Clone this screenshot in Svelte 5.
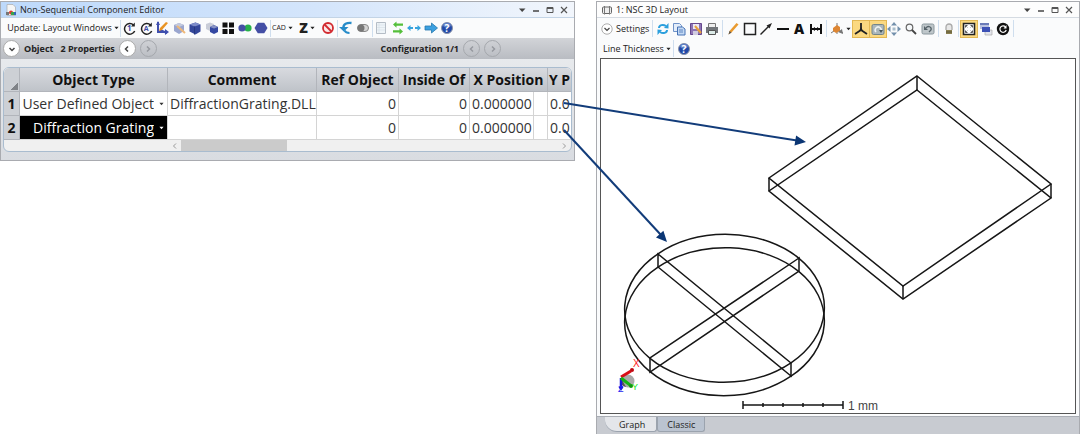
<script>
    const icons = {
        update: '<path d="M11.5 4A5.3 5.3 0 1 0 12.7 10" fill="none" stroke="#222" stroke-width="1.5"/><path d="M12.8 1.5v4H9z" fill="#222"/><text x="7.2" y="10.300" text-anchor="middle" font-size="8" font-weight="700" fill="#3d4ba5">1</text>',
        updateAll: '<path d="M11.5 4A5.3 5.3 0 1 0 12.7 10" fill="none" stroke="#222" stroke-width="1.5"/><path d="M12.8 1.5v4H9z" fill="#222"/><text x="7.2" y="10" text-anchor="middle" font-size="7" font-weight="700" fill="#3d4ba5">A</text>',
        axes: '<path d="M3 1v10h9M5 9l7 3" fill="none" stroke="#3f4fae" stroke-width="2"/><path d="M1 4l2-4 2 4zM10 8l4 3-4 3z" fill="#3f4fae"/><path d="M4 10l1-3 6-6 2 1-6 7z" fill="#e99424"/>',
        wand: '<path d="M2 4l5-2 5 2v6l-5 3-5-3z" fill="#9aa6cf"/><path d="M2 4l5-2 5 2-5 2z" fill="#c3cade"/><path d="M5 5l8 7" stroke="#efb878" stroke-width="2"/>',
        cube: '<path d="M1.500 3.500l6-2 5 2v7l-5 3-6-3z" fill="#34479a"/><path d="M1.500 3.500l6-2 5 2-6 2z" fill="#7d8cc9"/><path d="M6.500 5.500v8" stroke="#26387f"/>',
        cubes: '<path d="M1 3l4-1.500 4 1.500v5l-4 2-4-2z" fill="#c9cdd8"/><path d="M5 6l4-2 4 2v5l-4 2-4-2z" fill="#3448a2"/><path d="M5 6l4-2 4 2-4 1.500z" fill="#8792c4"/>',
        grid: '<path d="M1.500 1.500h5v5h-5zM8 1.500h5v5H8zM1.500 8h5v5h-5zM8 8h5v5H8z" fill="#111"/>',
        pair: '<circle cx="10" cy="7" r="3.600" fill="#27b04b"/><circle cx="4" cy="7" r="3.600" fill="#444fa5"/>',
        hexagon: '<path d="M3.800 1.800h6.400L13.500 7l-3.300 5.200H3.800L.5 7z" fill="#444fa5"/>',
        none: '<circle cx="7" cy="7" r="5" fill="#fbe9e9" stroke="#d22a30" stroke-width="1.800"/><path d="M3.500 3.500l7 7" stroke="#d22a30" stroke-width="1.800"/>',
        undo: '<path d="M12.500 2C8 1.500 4 3 4.500 7" fill="none" stroke="#258bc9" stroke-width="2.400"/><path d="M0 6h9.500L4.800 10.500z" fill="#258bc9"/><path d="M5.500 9.500c1 2 3 2.500 5 2.500" fill="none" stroke="#258bc9" stroke-width="2"/>',
        toggle: '<rect x="1.500" y="3.500" width="11" height="7" rx="3.500" fill="#d4d4d4" stroke="#888"/><circle cx="5" cy="7" r="3.500" fill="#777"/>',
        sheet: '<path d="M2.500 1.500h9v11h-9z" fill="#eef4f8" stroke="#b5bdc6"/><path d="M3 4h8M3 6.500h8M3 9h8M5 2v10" stroke="#d5dee6" stroke-width=".6"/>',
        swap: '<path d="M5.500.500v2H12v2.200H5.500v2L2 3.600zM8.500 7.300v2H2v2.200h6.500v2l3.500-3.100z" fill="#54bf3a"/>',
        spread: '<path d="M0 7l3.500-3v2H6v2H3.500v2zM14 7l-3.500-3v2H8v2h2.500v2z" fill="#37a3dd"/>',
        right: '<path d="M1 5h6.500V2L13.500 7l-6 5V9H1z" fill="#3ca0e0" stroke="#2678ae" stroke-width=".8"/>',
        help: '<circle cx="7" cy="7" r="5.500" fill="#2149a8" stroke="#8b93a8"/><ellipse cx="7" cy="4.200" rx="3.800" ry="2.400" fill="#5f80c8"/><text x="7" y="10.700" text-anchor="middle" font-size="10" font-weight="700" fill="#fff">?</text>',
        refresh: '<path d="M3 6c0-3 4-4 7-2M11 8c0 3-4 4-7 2" fill="none" stroke="#2b9fdd" stroke-width="2"/><path d="M8 6l4.500.500V1zM6 8l-4.500-.5V13z" fill="#2b9fdd"/>',
        copy: '<path d="M1.500 1.500h6l2 2v6h-8z" fill="#e3edfa" stroke="#6f92c8"/><path d="M5.500 5h5l2.500 2v6H5.500z" fill="#c3d9f4" stroke="#4672b5"/><path d="M7 8h4M7 10h4" stroke="#4672b5" stroke-width=".8"/>',
        save: '<path d="M1.500 1.500h11v11h-11z" fill="#8d74b4" stroke="#66478e"/><path d="M4 2h6v5H4z" fill="#ece8f4"/><path d="M4 9h5v4H4z" fill="#d1cce0"/><path d="M6 4l6 7" stroke="#e8a13a" stroke-width="2"/>',
        print: '<path d="M3.500 1.500h7v4h-7z" fill="#eee" stroke="#777"/><path d="M1 5h12v6H1z" fill="#72767a"/><path d="M3.500 8.500h7v4h-7z" fill="#dcebe8" stroke="#555"/>',
        pencil: '<path d="M2.500 12.500l1-3.500 7-8 2 1.500-7 8z" fill="#e99a2f"/><path d="M2.500 12.500l1-3.500 2 1.500z" fill="#555"/>',
        rect: '<path d="M1.500 1.500h11v11h-11z" fill="none" stroke="#222" stroke-width="1.500"/>',
        line: '<path d="M1.500 12.500l9-9" stroke="#222" stroke-width="1.300"/><path d="M13 1L7.500 3.500l3 3z" fill="#222"/>',
        dash: '<path d="M1 7h12" stroke="#111" stroke-width="2"/>',
        text: '<text x="7" y="12" text-anchor="middle" font-size="14" font-weight="800" fill="#111">A</text>',
        measure: '<path d="M2 2v10M12 2v10M2 7h10" stroke="#111" stroke-width="2"/><path d="M3 7l3-2v4zM11 7L8 5v4z" fill="#111"/>',
        view: '<path d="M1 11l6-4 6 4M7 1v11" fill="none" stroke="#777"/><path d="M3 6l4-3 3 2v4l-4 2-3-2z" fill="#dd8633"/><path d="M8 10l4-3 1 5z" fill="#777"/>',
        tripod: '<path d="M7 1v7M7 8l-6 4M7 8l6 4" fill="none" stroke="#222" stroke-width="1.800"/><path d="M7 5l2 4H5z" fill="#222"/>',
        camera: '<rect x="1" y="2.500" width="12" height="10" rx="1.500" fill="#aab6ba" stroke="#73858b"/><path d="M5 10A3 3 0 1 1 10 9" fill="none" stroke="#eef3f4" stroke-width="1.500"/><path d="M8 8h4l-2 3z" fill="#46555b"/>',
        move: '<path d="M7 0l3 3.500H4zM7 14l3-3.500H4zM0 7l3.500-3v6zM14 7l-3.500-3v6z" fill="#7290ac"/><path d="M5.500 5.500h3v3h-3z" fill="#a9bccb"/>',
        zoom: '<circle cx="5.500" cy="5.500" r="3.300" fill="#f5f8fa" stroke="#666" stroke-width="1.200"/><path d="M8 8l4 4" stroke="#444" stroke-width="1.800"/>',
        back: '<rect x="1" y="2" width="12" height="10" rx="1.500" fill="#bec6ca" stroke="#89969c"/><path d="M5 6c2-3 6-1 5 2L8 10" fill="none" stroke="#56636a" stroke-width="1.300"/><path d="M3 4v4h4z" fill="#56636a"/>',
        lock: '<path d="M4 8V5c0-4 6-4 6 0v3" fill="#e7e7e7" stroke="#aaa" stroke-width="1.300"/><path d="M4 8h6v4H4z" fill="#8c8151"/><path d="M4 10h6" stroke="#5b563b"/>',
        fit: '<path d="M1.500 1.500h11v11h-11z" fill="#fff" stroke="#222" stroke-width="1.600"/><path d="M3.500 5.500v-2h2M8.500 3.500h2v2M10.500 8.500v2h-2M5.500 10.500h-2v-2" fill="none" stroke="#555"/><path d="M3.500 3.500l2 2M10.500 3.500l-2 2M3.500 10.500l2-2M10.500 10.500l-2-2" stroke="#777" stroke-width=".8"/>',
        windows: '<path d="M1 1h9v6H1z" fill="#b9c1df"/><path d="M1 1h9v2H1z" fill="#6b7bb8"/><path d="M6 8h7v5H6z" fill="#e2e4eb" stroke="#aaa" stroke-width=".7"/><path d="M3 5h8v5H3z" fill="#3c50b5"/>',
        target: '<circle cx="7" cy="7" r="6.200" fill="#111"/><path d="M9.500 5A3.200 3.200 0 1 0 10.200 8" fill="none" stroke="#fff" stroke-width="1.200"/><path d="M10.500 3v3.500H7.500z" fill="#fff"/>',
    };

    const editorTools = [
        { width: 150, items: ['update', 'updateAll', 'axes', 'wand', 'cube', 'cubes', 'grid', 'pair', 'hexagon'] },
        { width: 67, items: ['CAD', 'Z', 'none'] },
        { width: 35, items: ['undo', 'toggle'] },
        { width: 84, items: ['sheet', 'swap', 'spread', 'right', 'help'] },
    ];

    const layoutTools = [
        { width: 70, items: ['refresh', 'copy', 'save', 'print'] },
        { width: 104, items: ['pencil', 'rect', 'line', 'dash', 'text', 'measure'] },
        { width: 112, items: ['view', 'tripod', 'camera', 'move', 'zoom', 'back'] },
        { width: 20, items: ['lock'] },
        { width: 55, items: ['fit', 'windows', 'target'] },
    ];

    const active = ['tripod', 'camera', 'fit'];
    const withCaret = ['CAD', 'Z', 'view'];

    const rows = [
        { id: 1, type: 'User Defined Object', comment: 'DiffractionGrating.DLL' },
        { id: 2, type: 'Diffraction Grating', comment: '' },
    ];

    let selected = 2;
    let tab = 'Graph';
</script>

{#snippet caret()}
    <svg class="caret" viewBox="0 0 6 4" aria-hidden="true"><path d="M.5.500h5L3 3.500z" fill="currentColor" /></svg>
{/snippet}

{#snippet chevron(d, label, dim)}
    <button class="round" class:dim aria-label={label}>
        <svg viewBox="0 0 10 10"><path {d} fill="none" stroke="currentColor" stroke-width="1.500" /></svg>
    </button>
{/snippet}

{#snippet windowButtons()}
    <div class="window-buttons">
        <button aria-label="Window menu"><svg viewBox="0 0 8 8"><path d="M1 2.500h6.500L4.200 6z" fill="#444" /></svg></button>
        <button aria-label="Minimize"><svg viewBox="0 0 8 8"><path d="M1 5h6" stroke="#444" stroke-width="1.500" /></svg></button>
        <button aria-label="Maximize"><svg viewBox="0 0 8 8"><path d="M1 1.500h6v5H1zM1 2.500h6" fill="none" stroke="#555" /></svg></button>
        <button aria-label="Close"><svg viewBox="0 0 8 8"><path d="M1 1l6 6M7 1L1 7" stroke="#555" stroke-width="1.200" /></svg></button>
    </div>
{/snippet}

{#snippet tools(groups)}
    {#each groups as group}
        <div class="group" style="width: {group.width}px">
            {#each group.items as item}
                <button class="tool" class:active={active.includes(item)} aria-label={item}>
                    {#if icons[item]}
                        <svg class="icon" viewBox="0 0 14 14">{@html icons[item]}</svg>
                    {:else}
                        <span class={item.toLowerCase()}>{item}</span>
                    {/if}
                    {#if withCaret.includes(item)}{@render caret()}{/if}
                </button>
            {/each}
        </div>
    {/each}
{/snippet}

<main>
    <section class="window editor">
        <header>
            <svg class="app-icon" viewBox="0 0 12 12">
                <path d="M2 .5h6l2.500 2.500v8.500H2z" fill="#f5f5f5" stroke="#aaa" stroke-width=".7" />
                <path d="M1 8h3v3H1z" fill="#777" />
                <circle cx="6" cy="8.500" r="2" fill="#dd3b30" />
                <path d="M6 8h3v3H6z" fill="#3ba34a" />
                <path d="M9 8h2v3H9z" fill="#3366bb" />
            </svg>
            <h1>Non-Sequential Component Editor</h1>
            {@render windowButtons()}
        </header>
        <div class="toolbar">
            <button class="menu">Update: Layout Windows {@render caret()}</button>
            {@render tools(editorTools)}
        </div>
        <div class="object-bar">
            {@render chevron('M2.500 4L5 6.500 7.500 4', 'Expand', false)}
            <span class="object-name">Object</span>
            <span>2 Properties</span>
            {@render chevron('M6 2.500L3.500 5 6 7.500', 'Previous object', false)}
            {@render chevron('M4 2.500L6.500 5 4 7.500', 'Next object', true)}
            <span class="configuration">Configuration 1/1</span>
            {@render chevron('M6 2.500L3.500 5 6 7.500', 'Previous configuration', true)}
            {@render chevron('M4 2.500L6.500 5 4 7.500', 'Next configuration', true)}
        </div>
        <div class="sheet">
            <table>
                <colgroup>
                    <col class="c-row" /><col class="c-type" /><col class="c-comment" /><col class="c-ref" />
                    <col class="c-inside" /><col class="c-x" /><col class="c-solve" /><col />
                </colgroup>
                <thead>
                    <tr>
                        <th class="corner" aria-label="Select all"></th>
                        <th>Object Type</th>
                        <th>Comment</th>
                        <th>Ref Object</th>
                        <th>Inside Of</th>
                        <th colspan="2">X Position</th>
                        <th class="last">Y P</th>
                    </tr>
                </thead>
                <tbody>
                    {#each rows as row}
                        <tr onclick={() => (selected = row.id)}>
                            <th>{row.id}</th>
                            <td class="type" class:selected={row.id === selected}>
                                <div class="pick">
                                    <select aria-label="Object type {row.id}">
                                        <option>{row.type}</option>
                                    </select>
                                    {@render caret()}
                                </div>
                            </td>
                            <td>{row.comment}</td>
                            <td class="number">0</td>
                            <td class="number">0</td>
                            <td class="number">0.000000</td>
                            <td></td>
                            <td class="last">0.0</td>
                        </tr>
                    {/each}
                </tbody>
            </table>
            <div class="scrollbar">
                <button aria-label="Scroll left"><svg viewBox="0 0 8 8"><path d="M5 1.500L2.500 4 5 6.500" fill="none" stroke="#999" /></svg></button>
                <div class="track"><div class="thumb"></div></div>
                <button aria-label="Scroll right"><svg viewBox="0 0 8 8"><path d="M3 1.500L5.500 4 3 6.500" fill="none" stroke="#999" /></svg></button>
            </div>
        </div>
    </section>

    <section class="window layout">
        <header>
            <svg class="app-icon" viewBox="0 0 12 12">
                <rect x="1.500" y="3" width="9" height="6.500" rx="1" fill="#eee" stroke="#666" />
                <path d="M3.500 2v8.500M8.500 2v8.500" stroke="#777" />
            </svg>
            <h1>1: NSC 3D Layout</h1>
            {@render windowButtons()}
        </header>
        <div class="toolbar">
            <button class="settings">
                <svg viewBox="0 0 12 12"><circle cx="6" cy="6" r="5.200" fill="#fff" stroke="#999" stroke-width=".8" /><path d="M3.500 5L6 7.500 8.500 5" fill="none" stroke="#444" stroke-width="1.200" /></svg>
                Settings
            </button>
            {@render tools(layoutTools)}
            <div class="group"></div>
        </div>
        <div class="toolbar second">
            <button class="menu">Line Thickness {@render caret()}</button>
            {@render tools([{ width: 20, items: ['help'] }])}
        </div>
        <div class="viewport">
            <svg viewBox="601 59 474 354" role="img" aria-label="3D layout">
                <g fill="none" stroke="#161616" stroke-width="1.500">
                    <!-- rectangular grating -->
                    <path d="M917 76L1051 184 903 286 769 178z" />
                    <path d="M917 90L1051 198 903 299 769 191z" />
                    <path d="M917 76v14M1051 184v14M903 286v13M769 178v13" />
                    <!-- circular grating -->
                    <circle r="1" transform="matrix(74.5 -50 66.5 54.5 724.5 308.3)" vector-effect="non-scaling-stroke" />
                    <circle r="1" transform="matrix(74.5 -50 66.5 54.5 724.5 321.7)" vector-effect="non-scaling-stroke" />
                    <path d="M658 254L791 363v13L658 267z" />
                    <path d="M799 258L650 358v14L799 271z" />
                    <!-- scale bar -->
                    <path d="M743 405h100M743 401v8M843 401v8M763 403v4M783 403v4M803 403v4M823 403v4" />
                </g>
                <text x="848" y="410" font-size="12" fill="#444">1 mm</text>
                <g>
                    <circle cx="628" cy="381" r="6.500" fill="#aaa" />
                    <path d="M621 378l5 9a6 6 0 0 1-5-4z" fill="#555" />
                    <path d="M621 377l10-6" stroke="#d80f18" stroke-width="3" />
                    <circle cx="632" cy="370" r="2" fill="#c00810" />
                    <path d="M621 378v11" stroke="#1717d8" stroke-width="2.500" />
                    <path d="M618.500 387h5l-2.500 4z" fill="#1717d8" />
                    <path d="M621 378l9 7" stroke="#13b413" stroke-width="3" />
                    <circle cx="631" cy="386" r="2" fill="#0c980c" />
                    <text x="633" y="367" font-size="10" fill="#ff2020">X</text>
                    <text x="632" y="390" font-size="9" fill="#22e622">Y</text>
                    <text x="618" y="392" font-size="9" fill="#2323f0">Z</text>
                </g>
            </svg>
        </div>
        <div class="tabs" role="tablist">
            {#each ['Graph', 'Classic'] as name}
                <button role="tab" aria-selected={tab === name} class:current={tab === name} onclick={() => (tab = name)}>{name}</button>
            {/each}
        </div>
    </section>

    <svg class="callouts" viewBox="0 0 1080 434" aria-hidden="true">
        <g stroke="#123c7a" stroke-width="2">
            <path d="M564 103L797 140.600" />
            <path d="M564 130L661 235" />
        </g>
        <path d="M806 142l-11.500 3.500 1.600-10zM667 242l-11-4.500 7.400-6.800z" fill="#0b3674" />
    </svg>
</main>

<style>
    :global(body) {
        background: #fff;
    }
    main {
        position: relative;
        display: grid;
        grid-template-columns: minmax(0, 575fr) minmax(0, 484fr);
        gap: 21px;
        align-items: start;
        min-height: 100vh;
        font-family: "Open Sans", "Noto Sans", sans-serif;
        font-size: 9px;
        line-height: 12px;
        color: #222;
    }
    button {
        display: flex;
        align-items: center;
        justify-content: center;
        padding: 0;
        border: 0;
        background: none;
        font: inherit;
        color: inherit;
        white-space: nowrap;
    }
    svg {
        display: block;
        flex: none;
    }
    .window {
        box-sizing: border-box;
        margin-top: 1px;
        border: 1px solid #a9abb0;
    }
    .editor {
        background: linear-gradient(#eff1f3, #d9dce1);
    }
    header {
        display: flex;
        align-items: center;
        gap: 3px;
        height: 15px;
        padding: 0 6px 0 4px;
    }
    .editor header {
        background: linear-gradient(90deg, #bdd9fb, #d4e5fb 55%, #f2f6fc);
        border-bottom: 1px solid #c3d4e6;
    }
    .layout header {
        background: #fdfdfd;
        border-bottom: 1px solid #d5dbe2;
    }
    h1 {
        margin: 0;
        font-size: 9px;
        font-weight: 400;
    }
    .app-icon {
        width: 12px;
        height: 12px;
    }
    .window-buttons {
        display: flex;
        gap: 6px;
        margin-left: auto;
    }
    .window-buttons svg {
        width: 8px;
        height: 8px;
    }
    .toolbar {
        display: flex;
        align-items: center;
        height: 20px;
        background: #fafbfc;
    }
    .menu {
        gap: 2px;
    }
    .editor .menu {
        box-sizing: border-box;
        width: 119px;
        padding-left: 5px;
    }
    .caret {
        width: 5px;
        height: 4px;
    }
    .group {
        display: flex;
        align-items: center;
        justify-content: space-between;
        box-sizing: border-box;
        height: 17px;
        padding: 0 2px 0 1px;
        border-left: 1px solid #cfdeee;
    }
    .layout .group {
        padding: 0 3px;
    }
    .tool {
        gap: 2px;
        height: 14px;
    }
    .icon {
        width: 14px;
        height: 14px;
    }
    .active {
        background: #fbd981;
        box-shadow: 0 0 0 1px #fbd981, 0 0 0 2px #e3b854;
    }
    .cad {
        font-size: 7px;
    }
    .z {
        font-size: 14px;
        font-weight: 800;
    }
    .object-bar {
        display: flex;
        align-items: center;
        gap: 4px;
        height: 21px;
        padding: 0 73px 0 2px;
        background: linear-gradient(#d2d4d8, #b9bcc2);
        font-weight: 700;
    }
    .object-name {
        margin-right: 3px;
    }
    .configuration {
        margin-left: auto;
    }
    .round {
        box-sizing: border-box;
        width: 17px;
        height: 17px;
        border: 1px solid #aaa;
        border-radius: 50%;
        background: #fff;
        color: #444;
    }
    .round svg {
        width: 10px;
        height: 10px;
    }
    .dim {
        background: none;
        color: #96999f;
        border-color: #a5a8ad;
    }
    .sheet {
        margin: 8px 2px;
        border: 1px solid #a9bccf;
        border-radius: 6px;
        overflow: hidden;
        background: #f0f0f0;
    }
    table {
        width: 100%;
        table-layout: fixed;
        border-collapse: separate;
        border-spacing: 0;
        background: #fff;
        font-size: 14px;
        line-height: 20px;
        color: #333;
    }
    .c-row { width: 16px; }
    .c-type { width: 148px; }
    .c-comment { width: 149px; }
    .c-ref { width: 82px; }
    .c-inside { width: 71px; }
    .c-x { width: 64px; }
    .c-solve { width: 14px; }
    th,
    td {
        box-sizing: border-box;
        height: 24px;
        padding: 0 2px;
        border-right: 1px solid #d4d4d4;
        border-bottom: 1px solid #d4d4d4;
        white-space: nowrap;
    }
    th {
        padding: 0;
        border-color: #b2b5bb;
        background: linear-gradient(#d8dadf, #bfc3c9);
        color: #111;
    }
    tbody th {
        background: #cdd0d5;
    }
    .corner {
        background: linear-gradient(135deg, transparent 50%, #808388 50%) 7px 14px / 7px 8px no-repeat, #cdd0d5;
    }
    .last {
        border-right: 0;
    }
    .number {
        text-align: right;
    }
    .pick {
        display: flex;
        align-items: center;
        gap: 5px;
        padding-right: 1px;
    }
    select {
        flex: 1;
        min-width: 0;
        padding: 0;
        border: 0;
        background: none;
        appearance: none;
        font: inherit;
        color: inherit;
        text-align-last: right;
    }
    .selected {
        background: #000;
        color: #fff;
    }
    .scrollbar {
        display: flex;
        height: 11px;
        padding: 0 2px 0 166px;
    }
    .scrollbar button {
        width: 10px;
    }
    .scrollbar svg {
        width: 8px;
        height: 8px;
    }
    .track {
        flex: 1;
    }
    .thumb {
        width: 28%;
        height: 11px;
        margin-left: 1px;
        background: #cbcbcb;
    }
    .layout {
        display: flex;
        flex-direction: column;
        min-height: calc(100vh - 1px);
        border-bottom: 0;
        background: #fafbfc;
    }
    .layout .toolbar {
        height: 21px;
        padding-left: 4px;
    }
    .layout .second {
        height: 19px;
        padding-left: 6px;
    }
    .second .menu {
        width: 70px;
        justify-content: flex-start;
    }
    .settings {
        gap: 3px;
        width: 51px;
        justify-content: flex-start;
    }
    .settings svg {
        width: 12px;
        height: 12px;
    }
    .viewport {
        flex: 1;
        margin: 0 3px 2px;
        border: 1px solid #555;
        background: #fff;
        font-family: "Liberation Sans", Arial, sans-serif;
    }
    .viewport svg {
        width: 100%;
        height: auto;
    }
    .tabs {
        display: flex;
        height: 17px;
        padding-left: 8px;
        background: #c8cbd1;
        border-top: 1px solid #a9adb4;
    }
    .tabs button {
        height: 15px;
        padding: 2px 9px 0;
        border: 1px solid #9ba3ae;
        border-top: 0;
        border-radius: 0 0 3px 3px;
        background: #bac3d0;
    }
    .tabs .current {
        padding: 2px 11px 0 14px;
        border-left: 0;
        border-radius: 0 0 3px 12px;
        background: #e4e6ea;
    }
    .callouts {
        position: absolute;
        top: 0;
        left: 0;
        width: 100%;
        height: auto;
        pointer-events: none;
    }
</style>
